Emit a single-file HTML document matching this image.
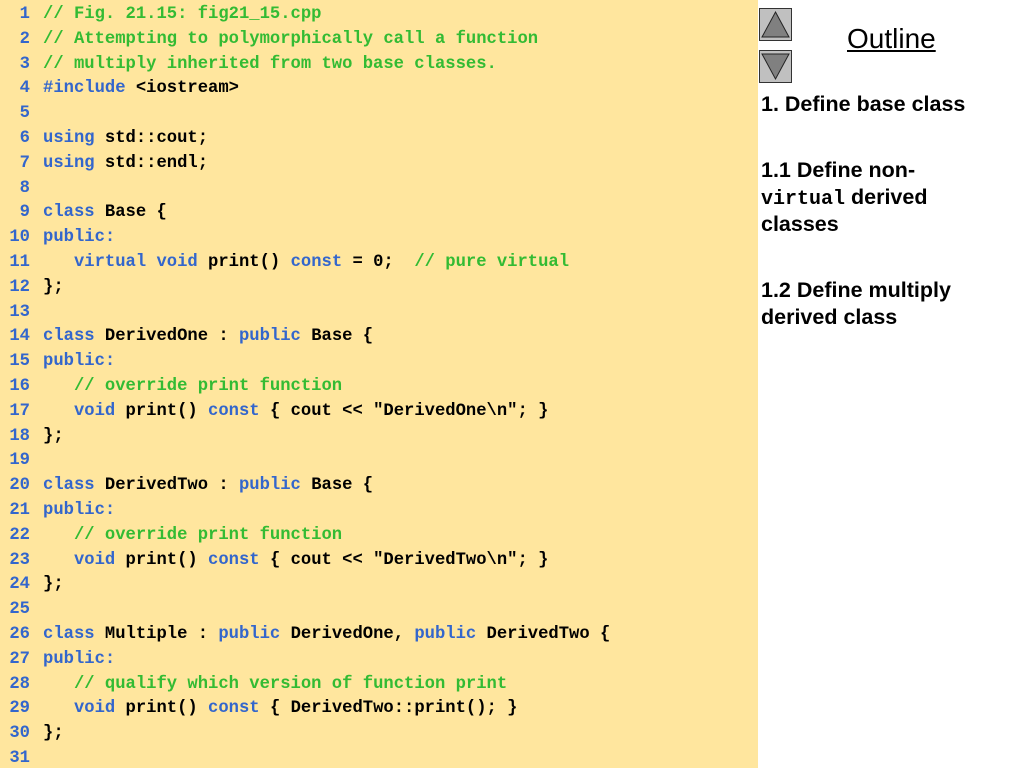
<!DOCTYPE html>
<html><head><meta charset="utf-8"><style>
body{margin:0;width:1024px;height:768px;background:#fff;position:relative;overflow:hidden}
#code{position:absolute;left:0;top:0;width:758px;height:768px;background:#FFE69E}
pre{margin:0;position:absolute;left:0;top:3px;font:bold 17.2px/24.8px "Liberation Mono",monospace;color:#000}
.n{color:#3366CC;display:inline-block;width:30px;text-align:right;margin-right:13px}
.c{color:#33BB33}.k{color:#3366CC}
.btn{position:absolute;left:759px;width:33px;height:33px;background:#C0C0C0;border:1px solid #333;box-sizing:border-box}
.r{position:absolute;left:761px;font:bold 21.5px/27px "Liberation Sans",sans-serif;color:#000}
.r code{font:bold 20px "Liberation Mono",monospace}
</style></head><body>
<div id="code"></div>
<pre><span class="n">1</span><span class="c">// Fig. 21.15: fig21_15.cpp</span>
<span class="n">2</span><span class="c">// Attempting to polymorphically call a function</span>
<span class="n">3</span><span class="c">// multiply inherited from two base classes.</span>
<span class="n">4</span><span class="k">#include</span> &lt;iostream&gt;
<span class="n">5</span>
<span class="n">6</span><span class="k">using</span> std::cout;
<span class="n">7</span><span class="k">using</span> std::endl;
<span class="n">8</span>
<span class="n">9</span><span class="k">class</span> Base {
<span class="n">10</span><span class="k">public:</span>
<span class="n">11</span>   <span class="k">virtual void</span> print() <span class="k">const</span> = 0;  <span class="c">// pure virtual</span>
<span class="n">12</span>};
<span class="n">13</span>
<span class="n">14</span><span class="k">class</span> DerivedOne : <span class="k">public</span> Base {
<span class="n">15</span><span class="k">public:</span>
<span class="n">16</span>   <span class="c">// override print function</span>
<span class="n">17</span>   <span class="k">void</span> print() <span class="k">const</span> { cout &lt;&lt; "DerivedOne\n"; }
<span class="n">18</span>};
<span class="n">19</span>
<span class="n">20</span><span class="k">class</span> DerivedTwo : <span class="k">public</span> Base {
<span class="n">21</span><span class="k">public:</span>
<span class="n">22</span>   <span class="c">// override print function</span>
<span class="n">23</span>   <span class="k">void</span> print() <span class="k">const</span> { cout &lt;&lt; "DerivedTwo\n"; }
<span class="n">24</span>};
<span class="n">25</span>
<span class="n">26</span><span class="k">class</span> Multiple : <span class="k">public</span> DerivedOne, <span class="k">public</span> DerivedTwo {
<span class="n">27</span><span class="k">public:</span>
<span class="n">28</span>   <span class="c">// qualify which version of function print</span>
<span class="n">29</span>   <span class="k">void</span> print() <span class="k">const</span> { DerivedTwo::print(); }
<span class="n">30</span>};
<span class="n">31</span></pre>
<div class="btn" style="top:8px"><svg width="31" height="31"><polygon points="15.5,3 29,28 2,28" fill="#808080" stroke="#222"/></svg></div>
<div class="btn" style="top:50px"><svg width="31" height="31"><polygon points="2,3 29,3 15.5,28" fill="#808080" stroke="#222"/></svg></div>
<div style="position:absolute;left:847px;top:23px;font:28px 'Liberation Sans',sans-serif;text-decoration:underline">Outline</div>
<div class="r" style="top:91px">1. Define base class</div>
<div class="r" style="top:157px">1.1 Define non-<br><code>virtual</code> derived<br>classes</div>
<div class="r" style="top:277px">1.2 Define multiply<br>derived class</div>
</body></html>
